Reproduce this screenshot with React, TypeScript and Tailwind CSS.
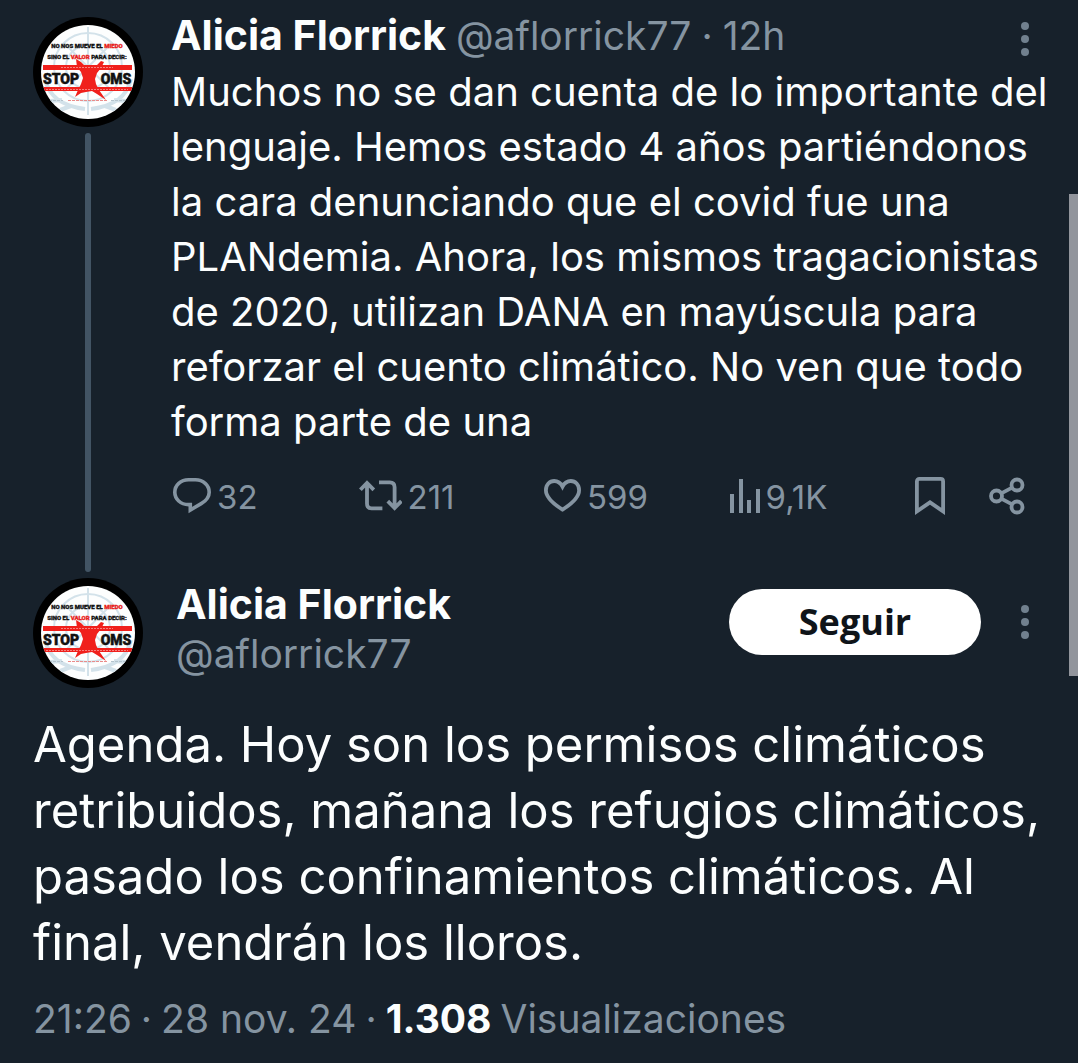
import React from "react";

type ActionPropsType = {
  label: string;
  count: string;
  icon: React.ReactNode;
};

const threadText = `Muchos no se dan cuenta de lo importante del
lenguaje. Hemos estado 4 años partiéndonos
la cara denunciando que el covid fue una
PLANdemia. Ahora, los mismos tragacionistas
de 2020, utilizan DANA en mayúscula para
reforzar el cuento climático. No ven que todo
forma parte de una`;

const mainText = `Agenda. Hoy son los permisos climáticos
retribuidos, mañana los refugios climáticos,
pasado los confinamientos climáticos. Al
final, vendrán los lloros.`;

function Avatar() {
  return (
    <svg viewBox="0 0 110 110" className="block w-[110px] h-[110px] shrink-0" aria-label="Alicia Florrick">
      <clipPath id="avatar-disc">
        <circle cx="55" cy="55" r="47" />
      </clipPath>
      <circle cx="55" cy="55" r="55" fill="#000" />
      <circle cx="55" cy="55" r="47" fill="#fdfefe" />
      <g clipPath="url(#avatar-disc)">
        <g fill="none" stroke="#d3e2ea" strokeWidth="2">
          <circle cx="55" cy="50" r="34" />
          <circle cx="55" cy="50" r="22" />
          <path d="M55 10v88M21 50h68M31 26l48 48M79 26L31 74" />
        </g>
        <g fill="none" stroke="#d3e2ea" strokeWidth="4">
          <path d="M12 62c4 18 17 27 40 30M98 62c-4 18-17 27-40 30" />
          <path d="M17 84l12-1M27 93l11-4M93 84l-12-1M83 93l-11-4" />
        </g>
        <rect x="10" y="48" width="89" height="5" fill="#f0201c" />
        <rect x="10" y="70" width="89" height="4" fill="#f0201c" />
        <path
          d="M43 42l5 3 4 4 6 3 5-3 5-5 3 1-3 6-4 5-2 6 1 5 3 6 7 10-9-6-5-3-6 1-5 1-6 4 3-7 3-6 2-6-2-6-4-5z"
          fill="#f0201c"
        />
        <g fontFamily="Roboto, sans-serif" fontWeight="900" fill="#111" stroke="#111" strokeWidth="0.3" textAnchor="middle">
          <text x="54" y="31" fontSize="6">
            NO NOS MUEVE EL{" "}
            <tspan fill="#e82220" stroke="#e82220">MIEDO</tspan>
          </text>
          <text x="54" y="42" fontSize="6">
            SINO EL{" "}
            <tspan fill="#e82220" stroke="#e82220">VALOR</tspan>
            {" "}PARA DECIR:
          </text>
          <text x="28" y="67" fontSize="14" strokeWidth="0.5">STOP</text>
          <text x="83" y="67" fontSize="14" strokeWidth="0.5">OMS</text>
        </g>
        <g stroke="#f7807e" strokeWidth="1" strokeDasharray="2 1">
          <path d="M28 50.500h52M13 72.500h82" />
        </g>
        <g strokeWidth="1" strokeDasharray="3 1">
          <path d="M16 83.500h14M78 83.500h14" stroke="#b4c4cd" />
          <path d="M35 83.500h39" stroke="#ea8c8a" />
        </g>
      </g>
    </svg>
  );
}

function MoreButton() {
  return (
    <button type="button" aria-label="Más opciones" className="flex w-8 flex-col items-center gap-[5px]">
      <span className="size-2 rounded-full bg-[#71808e]"></span>
      <span className="size-2 rounded-full bg-[#71808e]"></span>
      <span className="size-2 rounded-full bg-[#71808e]"></span>
    </button>
  );
}

function Action({ label, count, icon }: ActionPropsType) {
  return (
    <button type="button" aria-label={label} className="flex items-center gap-[6px] text-[33px] leading-10">
      {icon}
      <span className="pt-[3px]">{count}</span>
    </button>
  );
}

const replyIcon = (
  <svg width="38" height="36" viewBox="0 0 38 36" fill="none" stroke="currentColor" strokeWidth="3.6">
    <path d="M15.500 1.800h7c7.600 0 13.700 5.400 13.700 12.400 0 5-3.200 8.600-8 11.400L17.300 32v-5.400h-1.800C7.600 26.600 1.800 21 1.800 14.200S7.800 1.800 15.500 1.800z" />
  </svg>
);

const repostIcon = (
  <svg width="43" height="31" viewBox="0 0 43 31" fill="none" stroke="currentColor" strokeWidth="3.8">
    <path d="M1.400 9.800L8 3l6.800 6.800M8 3.400v20.200c0 3 1.800 4.800 4.600 4.800h10.800" />
    <path d="M20 2.400h10.800c3 0 4.800 1.800 4.800 4.800v20M28.800 21.200l6.800 6.800 6.800-6.800" />
  </svg>
);

const likeIcon = (
  <svg width="37" height="33" viewBox="0 0 37 33" fill="none" stroke="currentColor" strokeWidth="3.8">
    <path d="M18.500 30.600C9 24.600 1.900 18.400 1.900 11.200 1.900 5.600 5.600 2 10.200 2c3.400 0 6.400 1.900 8.300 5.600C20.400 3.900 23.400 2 26.800 2c4.600 0 8.300 3.600 8.300 9.200 0 7.200-7.100 13.400-16.600 19.400z" />
  </svg>
);

const viewsIcon = (
  <svg width="30" height="34" viewBox="0 0 30 34" fill="currentColor">
    <path d="M0 15h4v19H0zM9 0h4v34H9zM17 21h4v13h-4zM26 10h4v24h-4z" />
  </svg>
);

function App() {
  return (
    <main className="relative min-h-screen bg-[#17212b] px-[33px] pt-[17px] font-['Inter',sans-serif] text-[#fcfefe]">
      <article className="flex gap-7">
        <div className="flex flex-col items-center">
          <Avatar />
          <div className="my-[6px] w-[6px] grow rounded-full bg-[#425464]"></div>
        </div>
        <div className="min-w-0 grow pb-[61px]">
          <header className="flex h-[47px] items-start justify-between">
            <p className="flex items-baseline gap-[10px] text-[39px] leading-9 whitespace-nowrap text-[#8594a1]">
              <strong className="text-[41px] text-[#fcfefe]">Alicia Florrick</strong>
              <span>@aflorrick77</span>
              <span>·</span>
              <span>12h</span>
            </p>
            <div className="pt-[5px] pr-1">
              <MoreButton />
            </div>
          </header>
          <p className="text-[40px] leading-[55px] whitespace-pre">{threadText}</p>
          <div className="mt-[25px] mr-5 grid grid-cols-[1fr_1fr_1fr_1fr_auto] items-center pl-[2px] text-[#8594a1]">
            <Action label="Responder" count="32" icon={replyIcon} />
            <Action label="Repostear" count="211" icon={repostIcon} />
            <Action label="Me gusta" count="599" icon={likeIcon} />
            <Action label="Ver visualizaciones" count="9,1K" icon={viewsIcon} />
            <div className="flex items-center gap-11">
              <button type="button" aria-label="Guardar">
                <svg width="30" height="38" viewBox="0 0 30 38" fill="none" stroke="currentColor" strokeWidth="3.8">
                  <path d="M4.400 1.900h21.200c1.500 0 2.500 1 2.500 2.500v30L15 25.400 1.900 34.400v-30c0-1.500 1-2.500 2.500-2.500z" />
                </svg>
              </button>
              <button type="button" aria-label="Compartir">
                <svg width="36" height="38" viewBox="0 0 36 38" fill="none" stroke="currentColor" strokeWidth="3.8">
                  <circle cx="7.500" cy="19" r="5.500" />
                  <circle cx="28" cy="8" r="5.500" />
                  <circle cx="28" cy="30" r="5.500" />
                  <path d="M12.300 16.400l10.800-5.800M12.300 21.600l10.800 5.800" />
                </svg>
              </button>
            </div>
          </div>
        </div>
      </article>

      <article>
        <header className="flex items-start gap-[33px]">
          <Avatar />
          <div className="grow pt-[2px] text-[39px] leading-[49px]">
            <strong className="block text-[41px]">Alicia Florrick</strong>
            <span className="block text-[#8594a1]">@aflorrick77</span>
          </div>
          <div className="flex items-center gap-7 pt-[11px] pr-1">
            <button
              type="button"
              className="h-[66px] w-[252px] rounded-full bg-white font-['Open_Sans',sans-serif] text-[36px] font-bold text-[#0f1419]"
            >
              Seguir
            </button>
            <MoreButton />
          </div>
        </header>
        <p className="mt-6 text-[49px] leading-[66px] whitespace-pre">{mainText}</p>
        <p className="mt-5 flex gap-[9px] pb-5 text-[39px] leading-[46px] text-[#8594a1]">
          <span>21:26</span>
          <span>·</span>
          <span>28 nov. 24</span>
          <span>·</span>
          <strong className="text-[#fcfefe]">1.308</strong>
          <span>Visualizaciones</span>
        </p>
      </article>

      {/* scroll position marker */}
      <div className="absolute top-[194px] right-0 h-[482px] w-[9px] bg-[#92959c]"></div>
    </main>
  );
}

export default App;
